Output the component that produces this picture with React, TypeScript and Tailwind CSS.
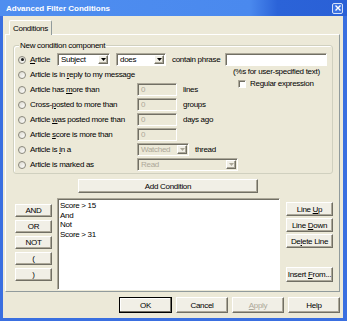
import React from 'react';

// classic 3D edges used by the dialog controls
const raised =
  'border border-t-white border-l-white border-r-[#716f64] border-b-[#716f64] shadow-[inset_-1px_-1px_0_#aca899] bg-[#f1efe6]';
const sunken =
  'border border-t-[#aca899] border-l-[#aca899] border-r-white border-b-white shadow-[inset_1px_1px_0_#716f64]';

interface BtnProps {
  children: React.ReactNode;
  className?: string;
  disabled?: boolean;
  isDefault?: boolean;
}

const Btn: React.FC<BtnProps> = ({ children, className = '', disabled, isDefault }) => (
  <div
    className={`flex items-center justify-center whitespace-nowrap ${
      isDefault ? 'border border-black bg-[#f1efe6] shadow-[inset_-1px_-1px_0_#716f64,inset_1px_1px_0_white]' : raised
    } ${disabled ? 'text-[#aca899]' : 'text-black'} ${className}`}
  >
    {children}
  </div>
);

const Radio: React.FC<{ checked?: boolean }> = ({ checked }) => (
  <div className="w-[8px] h-[8px] shrink-0 rounded-full border border-[#8a887c] bg-gradient-to-br from-[#dcdad0] to-white flex items-center justify-center">
    {checked && <div className="w-[3px] h-[3px] rounded-full bg-[#1a1a1a]" />}
  </div>
);

const Arrow: React.FC<{ disabled?: boolean }> = ({ disabled }) => (
  <div className={`w-[10px] h-full shrink-0 flex items-center justify-center ${raised}`}>
    <svg width="5" height="3" viewBox="0 0 5 3">
      <polygon points="0,0 5,0 2.5,3" fill={disabled ? '#aca899' : '#000'} />
    </svg>
  </div>
);

const Select: React.FC<{ value: string; className: string; disabled?: boolean }> = ({ value, className, disabled }) => (
  <div className={`flex items-stretch h-[13px] p-[1px] ${sunken} ${disabled ? 'bg-[#ece9d8] text-[#aca899]' : 'bg-white'} ${className}`}>
    <span className="flex-1 pl-[2px] leading-[10px]">{value}</span>
    <Arrow disabled={disabled} />
  </div>
);

const NumBox: React.FC = () => (
  <div className={`w-[40px] h-[13px] pl-[3px] leading-[11px] text-[#aca899] bg-[#ece9d8] ${sunken}`}>0</div>
);

interface RowProps {
  label: React.ReactNode;
  children?: React.ReactNode;
}

const Row: React.FC<RowProps> = ({ label, children }) => (
  <div className="flex items-center h-[15px]">
    <Radio />
    <span className="ml-[4px] w-[107px] shrink-0 whitespace-nowrap">{label}</span>
    {children}
  </div>
);

export default function App() {
  return (
    <div className="w-[347px] h-[321px] flex flex-col bg-[#3a6fe0] font-['Liberation_Sans',sans-serif] text-[8px] tracking-[-0.3px] leading-[9px] text-black select-none">
      {/* title bar */}
      <div className="h-[16px] shrink-0 flex items-center pl-[6px] pr-[4px] bg-[linear-gradient(to_right,#4f8ef0_0%,#4a89ee_72%,#2b63d8_80%,#2a60d6_100%)]">
        <span className="flex-1 text-white font-bold text-[8px] tracking-normal">Advanced Filter Conditions</span>
        <div className="w-[11px] h-[11px] rounded-[2px] border border-[#d6e2f8] bg-[#3c72e2] flex items-center justify-center">
          <svg width="6" height="6" viewBox="0 0 6 6">
            <path d="M0.5 0.5 L5.5 5.5 M5.5 0.5 L0.5 5.5" stroke="white" strokeWidth="1.4" />
          </svg>
        </div>
      </div>

      {/* client area */}
      <div className="flex-1 ml-[3px] mr-[4px] mb-[3px] bg-[#ece9d8] flex flex-col">
        <div className="pt-[4px] pl-[6px] flex">
          <div className="relative z-10 -mb-[1px] h-[15px] w-[43px] flex items-center justify-center bg-[#ece9d8] border border-b-0 border-t-white border-l-white border-r-[#919b9c] rounded-t-[2px]">
            Conditions
          </div>
        </div>

        {/* tab panel */}
        <div className="ml-[2px] mr-[3px] h-[258px] border border-t-white border-l-white border-r-[#919b9c] border-b-[#919b9c] flex flex-col">
          {/* group box */}
          <div className="relative mt-[10px] ml-[7px] mr-[6px] h-[129px] border border-[#d0d0bf] rounded-[3px] shadow-[inset_1px_1px_0_white]">
            <span className="absolute -top-[5px] left-[5px] px-[1px] bg-[#ece9d8]">New condition component</span>

            <div className="pt-[6px] pl-[4px]">
              <div className="flex items-center h-[15px]">
                <Radio checked />
                <span className="ml-[4px] w-[27px] shrink-0">
                  <span className="underline">A</span>rticle
                </span>
                <Select value="Subject" className="w-[53px]" />
                <Select value="does" className="w-[50px] ml-[6px]" />
                <span className="ml-[6px] w-[53px] shrink-0 whitespace-nowrap">contain phrase</span>
                <div className={`w-[102px] h-[13px] bg-white ${sunken}`} />
              </div>

              <div className="flex">
                <div className="w-[215px] shrink-0 flex flex-col">
                  <Row
                    label={
                      <>
                        Article is in <span className="underline">r</span>eply to my message
                      </>
                    }
                  />
                  <Row
                    label={
                      <>
                        Article has <span className="underline">m</span>ore than
                      </>
                    }
                  >
                    <NumBox />
                    <span className="ml-[6px]">lines</span>
                  </Row>
                  <Row
                    label={
                      <>
                        Cross-<span className="underline">p</span>osted to more than
                      </>
                    }
                  >
                    <NumBox />
                    <span className="ml-[6px]">groups</span>
                  </Row>
                  <Row
                    label={
                      <>
                        Article <span className="underline">w</span>as posted more than
                      </>
                    }
                  >
                    <NumBox />
                    <span className="ml-[6px]">days ago</span>
                  </Row>
                  <Row
                    label={
                      <>
                        Article <span className="underline">s</span>core is more than
                      </>
                    }
                  >
                    <NumBox />
                  </Row>
                  <Row
                    label={
                      <>
                        Article is <span className="underline">i</span>n a
                      </>
                    }
                  >
                    <Select value="Watched" className="w-[52px]" disabled />
                    <span className="ml-[6px]">thread</span>
                  </Row>
                  <Row label="Article is marked as">
                    <Select value="Read" className="w-[101px] shrink-0" disabled />
                  </Row>
                </div>

                <div className="flex flex-col items-start">
                  <span className="w-[86px] text-center whitespace-nowrap">(%s for user-specified text)</span>
                  <div className="flex items-center mt-[3px] ml-[5px]">
                    <div className={`w-[8px] h-[8px] bg-white ${sunken}`} />
                    <span className="ml-[4px]">Regular expression</span>
                  </div>
                </div>
              </div>
            </div>
          </div>

          <Btn className="mt-[5px] ml-[72px] w-[180px] h-[14px]">Add Condition</Btn>

          {/* list area */}
          <div className="flex mt-[5px]">
            <div className="ml-[9px] w-[37px] pt-[6px] flex flex-col gap-[3px]">
              <Btn className="h-[13px]">AND</Btn>
              <Btn className="h-[13px]">OR</Btn>
              <Btn className="h-[13px]">NOT</Btn>
              <Btn className="h-[13px]">(</Btn>
              <Btn className="h-[13px]">)</Btn>
            </div>
            <div className={`ml-[5px] w-[223px] h-[92px] bg-white pl-[2px] pt-[2px] leading-[9.5px] ${sunken}`}>
              <div>Score &gt; 15</div>
              <div>And</div>
              <div>Not</div>
              <div>Score &gt; 31</div>
            </div>
            <div className="ml-[6px] w-[47px] pt-[4px] flex flex-col gap-[2px]">
              <Btn className="h-[14px]">
                Line&nbsp;<span className="underline">U</span>p
              </Btn>
              <Btn className="h-[14px]">
                Line&nbsp;<span className="underline">D</span>own
              </Btn>
              <Btn className="h-[14px]">
                De<span className="underline">l</span>ete Line
              </Btn>
              <Btn className="h-[15px] mt-[17px]">
                Insert&nbsp;<span className="underline">F</span>rom...
              </Btn>
            </div>
          </div>
        </div>

        {/* dialog buttons */}
        <div className="mt-[5px] pr-[3px] flex justify-end gap-[4px]">
          <Btn className="w-[53px] h-[16px]" isDefault>
            OK
          </Btn>
          <Btn className="w-[52px] h-[16px]">Cancel</Btn>
          <Btn className="w-[52px] h-[16px]" disabled>
            <span className="underline">A</span>pply
          </Btn>
          <Btn className="w-[52px] h-[16px]">Help</Btn>
        </div>
      </div>
    </div>
  );
}
